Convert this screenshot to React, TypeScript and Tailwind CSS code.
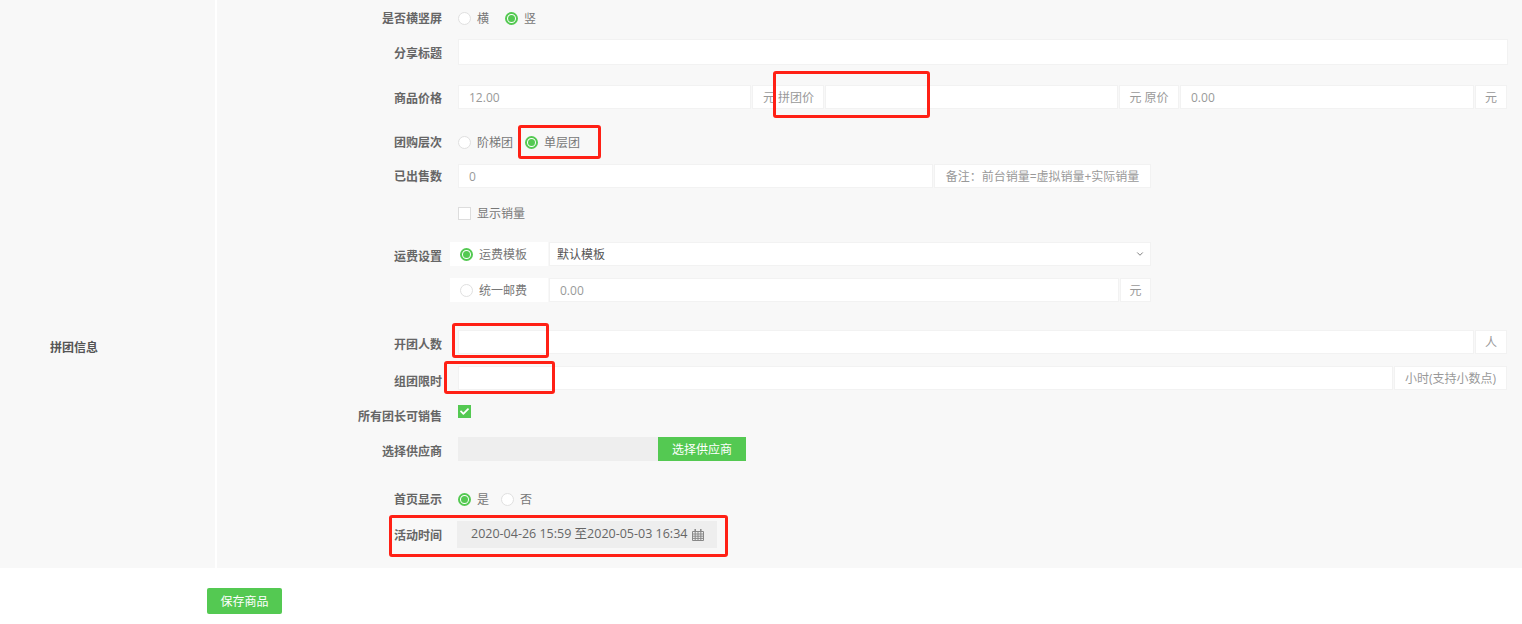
import { ChevronDown } from "lucide-react";
import { FaCheck } from "react-icons/fa";
import type { ReactNode } from "react";

const font = "[font-family:'Open_Sans','Noto_Sans_CJK_SC',sans-serif]";

function Row({ label, className, labelClass = "pt-0.5", children }: { label?: string; className: string; labelClass?: string; children: ReactNode }) {
  return (
    <div className={`flex items-center ${className}`}>
      <div className={`w-[225px] shrink-0 text-right font-bold text-[#666] ${labelClass}`}>{label}</div>
      <div className="ml-4 flex h-full flex-1 items-center">{children}</div>
    </div>
  );
}

function Radio({ on, label, className = "" }: { on?: boolean; label: string; className?: string }) {
  return (
    <div className={`flex items-center ${className}`}>
      <span
        className={`flex size-[13px] items-center justify-center rounded-full border bg-white ${on ? "border-[#54c952] border-2" : "border-[#e0e0e0]"}`}
      >
        {on && <span className="size-[7px] rounded-full bg-[#54c952]" />}
      </span>
      <span className="ml-1.5 translate-y-px text-[#777]">{label}</span>
    </div>
  );
}

function Input({ value, className }: { value?: string; className: string }) {
  return (
    <div className={`flex h-full items-center border border-[#f2f2f2] bg-white pt-0.5 pl-[10px] text-[#999] ${className}`}>{value}</div>
  );
}

function Addon({ children, className }: { children: ReactNode; className: string }) {
  return (
    <div className={`ml-px flex h-full items-center justify-center border border-[#f2f2f2] bg-white pt-0.5 text-[#999] ${className}`}>
      {children}
    </div>
  );
}

function Mark({ className }: { className: string }) {
  return <div className={`absolute rounded-[3px] border-[3px] border-[#ff2015] ${className}`} />;
}

export default function App() {
  return (
    <div className={`relative h-[624px] overflow-hidden bg-white text-xs ${font}`}>
      <div className="flex h-[568px]">
        <div className="w-[215px] bg-[#f8f8f8] pt-[340px] pl-[50px] font-bold text-[#555]">拼团信息</div>
        <div className="ml-0.5 flex-1 bg-[#f8f8f8] pt-2">
          <Row label="是否横竖屏" className="h-5">
            <Radio label="横" />
            <Radio on label="竖" className="ml-4" />
          </Row>
          <Row label="分享标题" labelClass="pt-1" className="mt-[11px] h-[26px]">
            <Input className="w-[1050px]" />
          </Row>
          <Row label="商品价格" labelClass="pt-1" className="mt-5 h-6">
            <Input value="12.00" className="w-[293px]" />
            <Addon className="w-[72px] pl-px">元 拼团价</Addon>
            <Input className="ml-px w-[293px]" />
            <Addon className="w-[60px]">元 原价</Addon>
            <Input value="0.00" className="ml-px w-[294px]" />
            <Addon className="w-[32px]">元</Addon>
          </Row>
          <Row label="团购层次" className="mt-[23px] h-5">
            <Radio label="阶梯团" />
            <Radio on label="单层团" className="ml-3" />
          </Row>
          <Row label="已出售数" className="mt-3 h-6">
            <Input value="0" className="w-[475px]" />
            <Addon className="w-[217px]">备注：前台销量=虚拟销量+实际销量</Addon>
          </Row>
          <Row className="mt-[15px] h-5">
            <span className="size-[13px] border border-[#ddd] bg-white" />
            <span className="ml-1.5 translate-y-px text-[#777]">显示销量</span>
          </Row>
          <Row label="运费设置" labelClass="pt-1.5" className="mt-[19px] h-6">
            <div className="-ml-2 flex h-full w-[98px] items-center bg-white pl-2.5">
              <Radio on label="运费模板" />
            </div>
            <div className="ml-px flex h-full w-[602px] items-center justify-between border border-[#f2f2f2] bg-white pr-[5px] pl-[7px] text-[#555]">
              <span className="translate-y-px">默认模板</span>
              <ChevronDown size={10} className="text-[#666]" />
            </div>
          </Row>
          <Row className="mt-3 h-6">
            <div className="-ml-2 flex h-full w-[98px] items-center bg-white pl-2.5">
              <Radio label="统一邮费" />
            </div>
            <Input value="0.00" className="ml-px w-[570px]" />
            <Addon className="w-[31px]">元</Addon>
          </Row>
          <Row label="开团人数" labelClass="pt-1.5" className="mt-7 h-6">
            <Input className="w-[1016px]" />
            <Addon className="w-[32px]">人</Addon>
          </Row>
          <Row label="组团限时" labelClass="pt-2" className="mt-3 h-6">
            <Input className="w-[935px]" />
            <Addon className="w-[113px]">小时(支持小数点)</Addon>
          </Row>
          <Row label="所有团长可销售" className="mt-4 h-5">
            <span className="-mt-2 -translate-y-px flex size-[13px] items-center justify-center bg-[#54c952] text-white">
              <FaCheck size={9} />
            </span>
          </Row>
          <Row label="选择供应商" labelClass="pt-1.5" className="mt-[11px] h-6">
            <div className="h-full w-[200px] bg-[#eee]" />
            <div className="flex h-full w-[88px] items-center justify-center bg-[#54c952] pt-0.5 text-white">选择供应商</div>
          </Row>
          <Row label="首页显示" className="mt-7 h-5">
            <Radio on label="是" />
            <Radio label="否" className="ml-3" />
          </Row>
          <Row label="活动时间" className="mt-3 h-[27px]">
            <div className="-ml-px flex h-full w-[260px] items-center gap-[5px] bg-[#eee] pl-[14px] text-[12.5px] text-[#666]">
              2020-04-26 15:59 至2020-05-03 16:34
              <svg width="12" height="12" viewBox="0 0 12 12" className="text-[#888]" fill="none" stroke="currentColor">
                <path d="M.5 2.5h11v9H.5zM.5 5h11M.5 7.2h11M.5 9.4h11M3.2 2.5v9M6 2.5v9M8.8 2.5v9" />
                <path d="M3.2 0v2.5M8.8 0v2.5" strokeWidth="1.5" />
              </svg>
            </div>
          </Row>
        </div>
      </div>
      <div className="pt-5 pl-[207px]">
        <button className="h-[26px] w-[75px] rounded-[2px] bg-[#54c952] pt-0.5 text-white">保存商品</button>
      </div>

      {/* annotations drawn over the screenshot */}
      <Mark className="top-[71px] left-[773px] h-[47px] w-[157px]" />
      <Mark className="top-[125px] left-[518px] h-[34px] w-[83px]" />
      <Mark className="top-[323px] left-[452px] h-[35px] w-[97px]" />
      <Mark className="top-[361px] left-[444px] h-[33px] w-[111px]" />
      <Mark className="top-[515px] left-[389px] h-[42px] w-[339px]" />
    </div>
  );
}
